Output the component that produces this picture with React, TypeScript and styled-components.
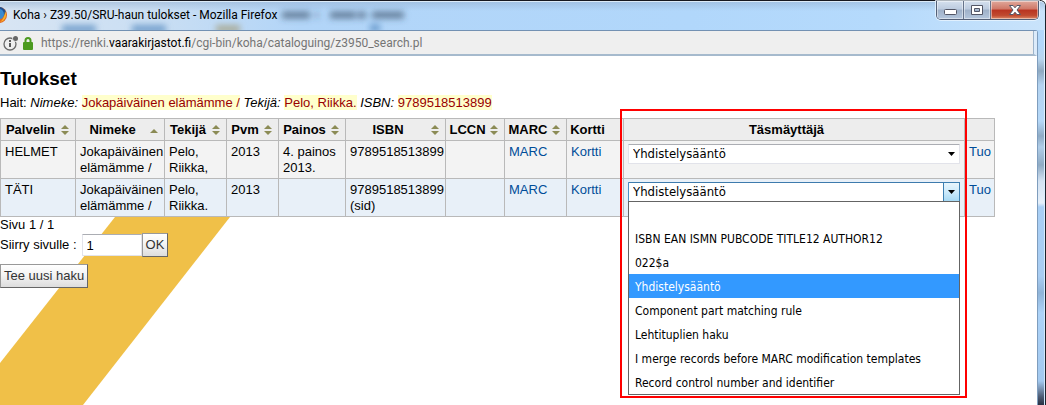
import React from "react";
import styled, { createGlobalStyle, css } from "styled-components";

const GlobalStyle = createGlobalStyle`
  *, *::before, *::after { box-sizing: border-box; }
  body {
    margin: 0;
    color: #000;
    background: #fff;
    font: 13px/16px "Liberation Sans", Arial, sans-serif;
  }
  button, input, select { font: inherit; margin: 0; }
`;

const uiFont = `Roboto, "Open Sans", sans-serif`;
const menuFont = `"DejaVu Sans Condensed", "DejaVu Sans", sans-serif`;

const Window = styled.div`
  display: flex;
  flex-direction: column;
  min-height: 100vh;
  padding-right: 7px;
  border-top: 1px solid #17181f;
  border-right: 1px solid #1b222b;
  border-top-right-radius: 6px;
  background:
    linear-gradient(#e4f3ff, #cfe6fb) right / 1px 100% no-repeat,
    linear-gradient(
      #b5d9fa 0, #b3d8fb 44px, #b9d6ef 58px, #8fa9c0 70px, #b4d3f0 84px,
      #b5d8f8 120px, #8fabc5 135px, #b0cde8 146px, #8fabc4 164px, #d3e2f2 180px,
      #e6f0fa 202px, #a9cff5 206px, #a9cdf2 275px, #90b4d8 292px, #add3f8 312px,
      #a3c9ef 380px, #4c5a72 396px, #232b3c 405px
    );
`;

const TitleBar = styled.header`
  position: relative;
  display: flex;
  align-items: flex-start;
  height: 29px;
  margin-right: -7px;
  padding-right: 6px;
  border-top: 1px solid #dcebf8;
  border-top-right-radius: 5px;
  background:
    linear-gradient(rgba(150, 178, 210, 0.55), rgba(180, 216, 251, 0) 9px),
    linear-gradient(90deg, #d8e5f3 0, #c9def3 160px, #b2d5f8 300px, #b1d7fb 66%, #b5dafc 84%, #c9e3fb 100%);
`;

const GlassReflection = styled.svg`
  position: absolute;
  inset: 0 auto auto 0;
`;

const Favicon = styled.svg`
  position: relative;
  flex: none;
  margin-top: 5px;
`;

const WindowTitle = styled.div`
  position: relative;
  flex: 1;
  padding: 5px 0 0 6px;
  font: 12px/16px ${uiFont};
  white-space: nowrap;
`;

const WindowControls = styled.div`
  position: relative;
  display: flex;
  height: 19px;
  margin-top: -1px;
  border: 1px solid #535f76;
  border-top: 0;
  border-radius: 0 0 5px 5px;
  overflow: hidden;
  box-shadow: 0 0 0 1px rgba(240, 248, 255, 0.7);
`;

const ControlButton = styled.button<{ $kind: "plain" | "close" }>`
  display: flex;
  align-items: center;
  justify-content: center;
  width: ${(p) => (p.$kind === "close" ? 47 : 27)}px;
  padding: 0;
  border: 0;
  border-right: 1px solid #66738a;
  background: ${(p) =>
    p.$kind === "close"
      ? "linear-gradient(#e0a89b 0, #cf7767 45%, #b93421 50%, #c04a30 80%, #dd8a68 100%)"
      : "linear-gradient(#d5e0ee 0, #bccbdf 45%, #9eb0c8 50%, #b4c6dc 100%)"};
  box-shadow: inset 0 0 0 1px rgba(255, 255, 255, 0.45);
  &:last-child { border-right: 0; }
`;

const Viewport = styled.div`
  flex: 1;
  display: flex;
  flex-direction: column;
  border-top: 1px solid #7391b3;
  border-right: 1px solid #7f9dbd;
  border-top-right-radius: 3px;
  background: #fff;
`;

const AddressBar = styled.div`
  display: flex;
  align-items: center;
  height: 25px;
  padding-left: 3px;
  border-right: 3px solid #dcebfa;
  border-bottom: 2px solid #a6bacd;
  background: #efefef;
  box-shadow: inset -1px 0 0 #9db4cb;
  white-space: nowrap;
`;

const Address = styled.div`
  padding: 1px 0 0 7px;
  color: #757575;
  font: 12px/16px ${uiFont};
  b { color: #000; font-weight: 400; }
`;

const Page = styled.main`
  padding-top: 13px;
`;

const Heading = styled.h1`
  margin: 0 0 6px;
  font-size: 19px;
  line-height: 20px;
`;

const SearchSummary = styled.p`
  margin: 0 0 7px;
  mark { color: #900; background: #ffc; }
`;

const ResultsTable = styled.table`
  width: calc(100% - 42px);
  table-layout: fixed;
  border-collapse: collapse;
  background: #fff;
`;

const Column = styled.col<{ $width?: number }>`
  width: ${(p) => (p.$width ? `${p.$width}px` : "auto")};
`;

const cell = css`
  padding: 3px 4px 2px;
  border: 1px solid #b9b9b9;
  text-align: left;
  vertical-align: top;
`;

const HeaderCell = styled.th`
  ${cell};
  position: relative;
  padding-left: 3px;
  background: #ededed;
  white-space: nowrap;
`;

const HeaderLabel = styled.div`
  display: flex;
  align-items: center;
  justify-content: space-between;
  padding-right: 2px;
  span { flex: 1; text-align: center; }
  svg { flex: none; margin-left: 4px; }
`;

const Row = styled.tr<{ $active?: boolean }>`
  background: ${(p) => (p.$active ? "#e8f0f8" : "#f3f3f3")};
`;

const Cell = styled.td`
  ${cell};
`;

const Link = styled.a`
  color: #004d99;
  text-decoration: none;
`;

const Highlight = styled.div`
  position: absolute;
  z-index: 3;
  top: -10px;
  left: -4px;
  right: -3px;
  height: 289px;
  border: 2px solid #f00;
  pointer-events: none;
`;

const SelectBox = styled.div`
  position: relative;
  font: 13px/18px ${menuFont};
`;

const Select = styled.select<{ $open?: boolean }>`
  display: block;
  width: 100%;
  height: 20px;
  padding: 0 20px 0 4px;
  appearance: none;
  border: 1px solid ${(p) => (p.$open ? "#4d90c4" : "#e2e3ea")};
  border-top-color: ${(p) => (p.$open ? "#3d7bad" : "#abadb3")};
  border-radius: 1px;
  background: #fff;
  color: #000;
  outline: 0;
`;

const SelectArrow = styled.span<{ $open?: boolean }>`
  position: absolute;
  top: 0;
  right: 0;
  display: flex;
  align-items: center;
  justify-content: center;
  width: 17px;
  height: 20px;
  pointer-events: none;
  border: 1px solid ${(p) => (p.$open ? "#3c7fb1" : "transparent")};
  background: ${(p) => (p.$open ? "linear-gradient(#e8f6fd, #c9e9fb 55%, #a6d9f4)" : "none")};
`;

const OptionList = styled.ul`
  position: absolute;
  z-index: 2;
  top: 19px;
  left: 0;
  right: 0;
  margin: 0;
  padding: 0;
  border: 1px solid #646464;
  background: #fff;
  list-style: none;
`;

const Option = styled.li<{ $selected?: boolean }>`
  height: 24px;
  padding-left: 6px;
  color: ${(p) => (p.$selected ? "#fff" : "#000")};
  background: ${(p) => (p.$selected ? "#39f" : "transparent")};
  font-size: 12px;
  line-height: 26px;
  white-space: nowrap;
`;

const Paging = styled.section`
  position: relative;
`;

const Band = styled.svg`
  position: absolute;
  top: 0;
  left: 0;
`;

const PageForm = styled.form`
  position: relative;
  display: flex;
  flex-direction: column;
  align-items: flex-start;
`;

const JumpRow = styled.div`
  display: flex;
  align-items: center;
  margin-bottom: 7px;
  label { padding-right: 5px; }
`;

const PageInput = styled.input`
  width: 60px;
  height: 22px;
  padding: 0 4px;
  border: 1px solid #e2e3ea;
  border-top-color: #abadb3;
  border-radius: 1px;
  background: #fff;
`;

const Button = styled.button`
  height: 24px;
  padding: 0 3px;
  border: 1px solid #999;
  border-right-color: #666;
  border-bottom-color: #666;
  background: linear-gradient(#fff, #f4f4f4 45%, #ddd);
  color: #333;
  white-space: nowrap;
`;

type Sort = "both" | "up" | "none";

const SortIcon = ({ kind }: { kind: Sort }) => (
  <svg width="8" height="10" viewBox="0 0 8 10" aria-hidden="true">
    {kind === "both" && <path d="M4 0 8 4H0ZM0 6h8L4 10Z" fill="#8b8b55" />}
    {kind === "up" && <path d="M4 4 8 8H0Z" fill="#8b8b55" />}
  </svg>
);

const columns: { label: string; sort: Sort; width?: number }[] = [
  { label: "Palvelin", sort: "both", width: 75 },
  { label: "Nimeke", sort: "up", width: 89 },
  { label: "Tekijä", sort: "both", width: 62 },
  { label: "Pvm", sort: "both", width: 52 },
  { label: "Painos", sort: "both", width: 67 },
  { label: "ISBN", sort: "both", width: 100 },
  { label: "LCCN", sort: "both", width: 59 },
  { label: "MARC", sort: "both", width: 62 },
  { label: "Kortti", sort: "none", width: 57 },
  { label: "Täsmäyttäjä", sort: "none" },
  { label: "", sort: "none", width: 30 },
];

const rows = [
  ["HELMET", "Jokapäiväinen elämämme /", "Pelo, Riikka,", "2013", "4. painos 2013.", "9789518513899", ""],
  ["TÄTI", "Jokapäiväinen elämämme /", "Pelo, Riikka.", "2013", "", "9789518513899 (sid)", ""],
];

const matchers = [
  "",
  "ISBN EAN ISMN PUBCODE TITLE12 AUTHOR12",
  "022$a",
  "Yhdistelysääntö",
  "Component part matching rule",
  "Lehtituplien haku",
  "I merge records before MARC modification templates",
  "Record control number and identifier",
];

const chosen = "Yhdistelysääntö";

function MatcherSelect({ open, label }: { open?: boolean; label: string }) {
  return (
    <SelectBox>
      <Select $open={open} defaultValue={chosen} aria-label={label}>
        {matchers.map((m) => (
          <option key={m}>{m}</option>
        ))}
      </Select>
      <SelectArrow $open={open}>
        <svg width="7" height="4" viewBox="0 0 7 4" aria-hidden="true">
          <path d="M0 0h7L3.500 4Z" />
        </svg>
      </SelectArrow>
      {open && (
        <OptionList role="listbox" aria-label={label}>
          {matchers.map((m) => (
            <Option key={m} role="option" aria-selected={m === chosen} $selected={m === chosen}>
              {m}
            </Option>
          ))}
        </OptionList>
      )}
    </SelectBox>
  );
}

function BrowserTitle() {
  return (
    <TitleBar>
      <GlassReflection width="420" height="28" aria-hidden="true">
        <defs>
          <filter id="soft" filterUnits="userSpaceOnUse" x="0" y="-10" width="420" height="50">
            <feGaussianBlur stdDeviation="3" />
          </filter>
        </defs>
        <g filter="url(#soft)">
          <path d="M282 13h28M316 13h2M330 13h26M358 13h8M372 13h32" stroke="#31465c" strokeOpacity="0.6" strokeWidth="7" />
          <path d="M62 27h34M132 27h34M370 26h10" stroke="#5288bd" strokeOpacity="0.7" strokeWidth="8" />
          <path d="M216 27h24" stroke="#a5a287" strokeOpacity="0.8" strokeWidth="8" />
        </g>
      </GlassReflection>
      <Favicon width="7" height="16" viewBox="0 0 7 16" aria-hidden="true">
        <circle cx="-1" cy="8" r="8" fill="#e2661c" />
        <path d="M0 0a8 8 0 0 1 6 5L4 9 0 8Z" fill="#1e4f91" />
        <path d="M0 2q4 1 4 6-1 4-4 4Z" fill="#3a8bd0" />
        <path d="M5 4q3 6-2 10l-3 1q5-4 5-11Z" fill="#f7b42c" />
      </Favicon>
      <WindowTitle>Koha › Z39.50/SRU-haun tulokset - Mozilla Firefox</WindowTitle>
      <WindowControls>
        <ControlButton $kind="plain" aria-label="Pienennä">
          <svg width="13" height="10" viewBox="0 0 13 10">
            <rect x="0.500" y="4.500" width="12" height="5" rx="1" fill="#fff" stroke="#535666" />
          </svg>
        </ControlButton>
        <ControlButton $kind="plain" aria-label="Suurenna">
          <svg width="12" height="10" viewBox="0 0 12 10">
            <path d="M.5.5h11v9H.5ZM3.500 3.500v3h5v-3Z" fill="#fff" fillRule="evenodd" stroke="#535666" />
          </svg>
        </ControlButton>
        <ControlButton $kind="close" aria-label="Sulje">
          <svg width="12" height="10" viewBox="0 0 12 10">
            <path
              d="M.5.5h3.600L6 2.800 7.900.5h3.600L8 5l3.500 4.500H7.900L6 7.200 4.100 9.500H.5L4 5Z"
              fill="#fff"
              stroke="#535666"
            />
          </svg>
        </ControlButton>
      </WindowControls>
    </TitleBar>
  );
}

function BrowserAddress() {
  return (
    <AddressBar>
      <svg width="31" height="16" viewBox="0 0 31 16" aria-hidden="true">
        <circle cx="7" cy="9" r="6" fill="none" stroke="#6a6a6a" strokeWidth="1.300" />
        <path d="M7 8v4M7 5v2" stroke="#5a5a5a" strokeWidth="2" />
        <circle cx="12.500" cy="3.500" r="3.200" fill="#efefef" />
        <circle cx="12.500" cy="3.500" r="2.500" fill="#666" />
        <path d="M22.500 8V5.500a2.500 2.500 0 0 1 5 0V8" fill="none" stroke="#4c9a1f" strokeWidth="2" />
        <rect x="20" y="7" width="10" height="8" rx="1" fill="#4c9a1f" />
      </svg>
      <Address>
        https://renki.<b>vaarakirjastot.fi</b>/cgi-bin/koha/cataloguing/z3950_search.pl
      </Address>
    </AddressBar>
  );
}

function Results() {
  return (
    <ResultsTable>
      <colgroup>
        {columns.map((c) => (
          <Column key={c.label} $width={c.width} />
        ))}
      </colgroup>
      <thead>
        <tr>
          {columns.map((c) => (
            <HeaderCell key={c.label} scope="col">
              {c.label && (
                <HeaderLabel>
                  <span>{c.label}</span>
                  <SortIcon kind={c.sort} />
                </HeaderLabel>
              )}
              {c.label === "Täsmäyttäjä" && <Highlight />}
            </HeaderCell>
          ))}
        </tr>
      </thead>
      <tbody>
        {rows.map((row, i) => (
          <Row key={row[0]} $active={i === 1}>
            {row.map((text, j) => (
              <Cell key={j}>{text}</Cell>
            ))}
            <Cell><Link href="#marc">MARC</Link></Cell>
            <Cell><Link href="#kortti">Kortti</Link></Cell>
            <Cell><MatcherSelect open={i === 1} label={`Täsmäyttäjä ${row[0]}`} /></Cell>
            <Cell><Link href="#tuo">Tuo</Link></Cell>
          </Row>
        ))}
      </tbody>
    </ResultsTable>
  );
}

export default function App() {
  return (
    <>
      <GlobalStyle />
      <Window>
        <BrowserTitle />
        <Viewport>
          <BrowserAddress />
          <Page>
            <Heading>Tulokset</Heading>
            <SearchSummary>
              Hait: <i>Nimeke:</i> <mark>Jokapäiväinen elämämme /</mark> <i>Tekijä:</i>{" "}
              <mark>Pelo, Riikka.</mark> <i>ISBN:</i> <mark>9789518513899</mark>
            </SearchSummary>
            <Results />
            <Paging>
              <Band width="231" height="188" viewBox="0 0 231 188" aria-hidden="true">
                <path d="M115 0h115L83 188H0V146Z" fill="#f0c048" />
              </Band>
              <PageForm onSubmit={(e) => e.preventDefault()}>
                <div>Sivu 1 / 1</div>
                <JumpRow>
                  <label htmlFor="page">Siirry sivulle :</label>
                  <PageInput id="page" defaultValue="1" />
                  <Button type="submit">OK</Button>
                </JumpRow>
                <Button type="button">Tee uusi haku</Button>
              </PageForm>
            </Paging>
          </Page>
        </Viewport>
      </Window>
    </>
  );
}
